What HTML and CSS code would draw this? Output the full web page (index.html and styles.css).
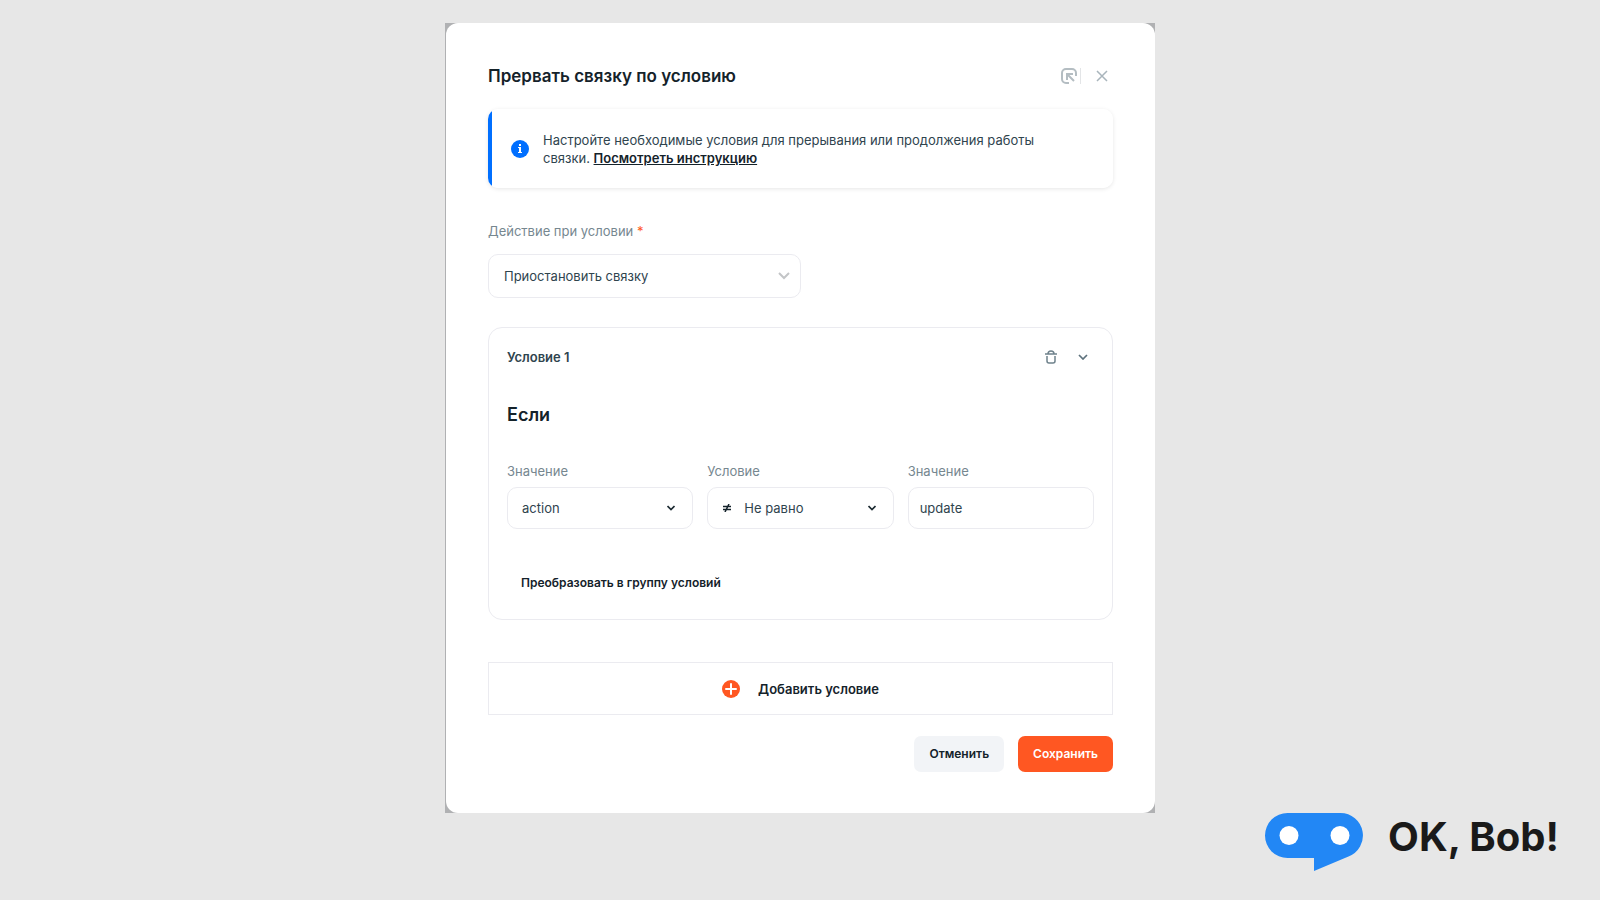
FILE: index.html
```html
<!DOCTYPE html>
<html lang="ru">
<head>
  <meta charset="UTF-8">
  <meta name="viewport" content="width=device-width, initial-scale=1.0">
  <title>Прервать связку по условию</title>
  <link rel="stylesheet" href="styles.css">
</head>
<body>
  <div class="frame">
    <main class="modal">
      <header class="modal-header">
        <h1>Прервать связку по условию</h1>
        <button class="icon-button expand" aria-label="Развернуть">
          <svg width="16" height="16" viewBox="0 0 16 16" fill="none" stroke="#b4bdc2" stroke-width="2">
            <path d="M15 8V5a4 4 0 0 0-4-4H5a4 4 0 0 0-4 4v6a4 4 0 0 0 4 4h3"/>
            <path d="M6 12V6h6M6 6l7 7"/>
          </svg>
        </button>
        <button class="icon-button" aria-label="Закрыть">
          <svg width="12" height="12" viewBox="0 0 12 12" fill="none" stroke="#a9b5bc" stroke-width="1.5">
            <path d="M1 1l10 10M11 1L1 11"/>
          </svg>
        </button>
      </header>

      <div class="info">
        <svg width="18" height="18" viewBox="0 0 18 18">
          <circle cx="9" cy="9" r="9" fill="#006fff"/>
          <path d="M8 4h2v2H8zM7 7h3v5h1v1H7v-1h1V8H7z" fill="#fff"/>
        </svg>
        <p>Настройте необходимые условия для прерывания или продолжения работы<br>связки. <a href="#">Посмотреть инструкцию</a></p>
      </div>

      <div class="action">
        <label for="action">Действие при условии <span class="required">*</span></label>
        <div class="control">
          <select id="action">
            <option>Приостановить связку</option>
          </select>
          <svg class="chevron" width="12" height="8" viewBox="0 0 12 8" fill="none" stroke="#c3c5c7" stroke-width="2">
            <path d="M1 1l5 5 5-5"/>
          </svg>
        </div>
      </div>

      <section class="card">
        <div class="card-header">
          <h2>Условие 1</h2>
          <button class="icon-button" aria-label="Удалить условие">
            <svg width="12" height="14" viewBox="0 0 12 14" fill="none" stroke="#6f828c" stroke-width="1.5">
              <path d="M0 4h12M3 4c0-4 6-4 6 0M2 6v5a2 2 0 0 0 2 2h4a2 2 0 0 0 2-2V6"/>
            </svg>
          </button>
          <button class="icon-button" aria-label="Свернуть условие">
            <svg width="10" height="6" viewBox="0 0 10 6" fill="none" stroke="#5e727d" stroke-width="1.7">
              <path d="M1 1l4 4 4-4"/>
            </svg>
          </button>
        </div>
        <h3>Если</h3>
        <div class="fields">
          <div>
            <label for="left">Значение</label>
            <div class="control">
              <select id="left">
                <option>action</option>
              </select>
              <svg class="chevron" width="8" height="6" viewBox="0 0 8 6" fill="none" stroke="#1b2a31" stroke-width="1.7">
                <path d="M.5 1L4 4.500 7.500 1"/>
              </svg>
            </div>
          </div>
          <div>
            <label for="operator">Условие</label>
            <div class="control with-sign">
              <svg class="sign" width="8" height="8" viewBox="0 0 8 8" fill="none" stroke="#14222a" stroke-width="1.5">
                <path d="M0 2.500h8M0 5.500h8M6 0L2 8"/>
              </svg>
              <select id="operator">
                <option>Не равно</option>
              </select>
              <svg class="chevron" width="8" height="6" viewBox="0 0 8 6" fill="none" stroke="#1b2a31" stroke-width="1.7">
                <path d="M.5 1L4 4.500 7.500 1"/>
              </svg>
            </div>
          </div>
          <div>
            <label for="right">Значение</label>
            <div class="control">
              <input id="right" type="text" value="update">
            </div>
          </div>
        </div>
        <button class="group-button">Преобразовать в группу условий</button>
      </section>

      <button class="add-button">
        <svg width="18" height="18" viewBox="0 0 18 18">
          <circle cx="9" cy="9" r="9" fill="#ff5722"/>
          <path d="M9 4v10M4 9h10" stroke="#fff" stroke-width="2" stroke-linecap="round"/>
        </svg>
        Добавить условие
      </button>

      <footer class="modal-footer">
        <button class="button">Отменить</button>
        <button class="button primary">Сохранить</button>
      </footer>
    </main>
  </div>

  <div class="brand">
    <svg width="98" height="58" viewBox="0 0 98 58">
      <path d="M22.500 0h53a22.500 22.500 0 0 1 8 43.500L49 58V45H22.500a22.500 22.500 0 0 1 0-45z" fill="#2287f5"/>
      <circle cx="24" cy="22.500" r="9.500" fill="#fff"/>
      <circle cx="75" cy="22.500" r="9.500" fill="#fff"/>
    </svg>
    <span>OK, Bob!</span>
  </div>
</body>
</html>
```

FILE: styles.css
```css
* {
  box-sizing: border-box;
}
body {
  display: flex;
  flex-direction: column;
  align-items: center;
  min-height: 100vh;
  margin: 0;
  padding-top: 23px;
  background: #e7e7e7;
  color: #2f444e;
  font-family: Inter, "Liberation Sans", sans-serif;
  font-size: 13px;
  line-height: 18px;
}
button, input, select {
  font: inherit;
  color: inherit;
}
button {
  border: 0;
  padding: 0;
  background: none;
  cursor: pointer;
}
svg {
  display: block;
  flex: none;
}
h1, h2, h3, p {
  margin: 0;
}
.frame {
  width: 100%;
  max-width: 710px;
  padding-left: 1px;
  background: #b0b1b3;
}
.modal {
  padding: 40px 42px 41px;
  border-radius: 12px;
  background: #fff;
}
.modal-header {
  display: flex;
  align-items: center;
  margin-bottom: 20px;
}
h1, h3 {
  color: #14222a;
  font-size: 18px;
  font-weight: 600;
  line-height: 26px;
}
h1 {
  flex: 1;
  font-size: 17px;
}
.icon-button {
  display: flex;
  align-items: center;
  justify-content: center;
  width: 22px;
  height: 16px;
}
.expand {
  justify-content: flex-start;
  width: 20px;
  margin-right: 10px;
  border-right: 1px solid #e3e5e7;
}
.info {
  display: flex;
  align-items: center;
  gap: 14px;
  padding: 22px 23px 21px;
  border-radius: 10px;
  background: linear-gradient(to right, #006fff 4px, #fff 4px);
  box-shadow: 0 1px 4px rgba(0, 0, 0, 0.1);
}
.info a {
  color: #14222a;
  font-weight: 600;
}
.action {
  width: 50%;
  margin: 34px 0 29px;
}
label {
  display: block;
  margin-bottom: 7px;
  color: #768790;
}
.action label {
  margin-bottom: 14px;
}
.required {
  color: #ff5722;
}
.control {
  position: relative;
}
.control select, .control input {
  display: block;
  width: 100%;
  height: 42px;
  padding: 0 14px;
  border: 1px solid #ebebf0;
  border-radius: 10px;
  background: #fff;
  appearance: none;
}
.control input {
  padding: 0 11px;
}
.action .control select {
  height: 44px;
  padding: 0 15px;
}
.with-sign select {
  padding-left: 36px;
}
.chevron, .sign {
  position: absolute;
  top: 50%;
  right: 18px;
  transform: translateY(-50%);
  pointer-events: none;
}
.action .chevron {
  right: 11px;
}
.sign {
  right: auto;
  left: 16px;
}
.control.with-sign select {
  padding-left: 36px;
}
.card {
  padding: 20px 18px;
  border: 1px solid #ebebf0;
  border-radius: 14px;
}
.card-header {
  display: flex;
  align-items: center;
  gap: 10px;
}
h2 {
  flex: 1;
  font-size: 13px;
  font-weight: 600;
  line-height: 18px;
}
h3 {
  margin: 36px 0 34px;
}
.fields {
  display: grid;
  grid-template-columns: repeat(3, 1fr);
  gap: 14px;
}
.group-button {
  display: block;
  margin-top: 38px;
  padding: 7px 14px;
  color: #14222a;
  font-size: 12px;
  font-weight: 600;
}
.add-button {
  display: flex;
  align-items: center;
  justify-content: center;
  gap: 18px;
  width: 100%;
  height: 53px;
  margin-top: 42px;
  border: 1px solid #ebebf0;
  color: #14222a;
  font-weight: 600;
}
.modal-footer {
  display: flex;
  justify-content: flex-end;
  gap: 14px;
  margin-top: 21px;
}
.button {
  height: 36px;
  padding: 0 15px;
  border-radius: 7px;
  background: #f2f4f7;
  color: #14222a;
  font-size: 12px;
  font-weight: 600;
}
.primary {
  background: #ff5722;
  color: #fff;
}
.brand {
  display: flex;
  align-items: flex-start;
  align-self: flex-end;
  gap: 25px;
  margin-right: 41px;
  color: #1a1a1a;
  font-size: 40px;
  font-weight: 700;
  line-height: 48px;
}
```
